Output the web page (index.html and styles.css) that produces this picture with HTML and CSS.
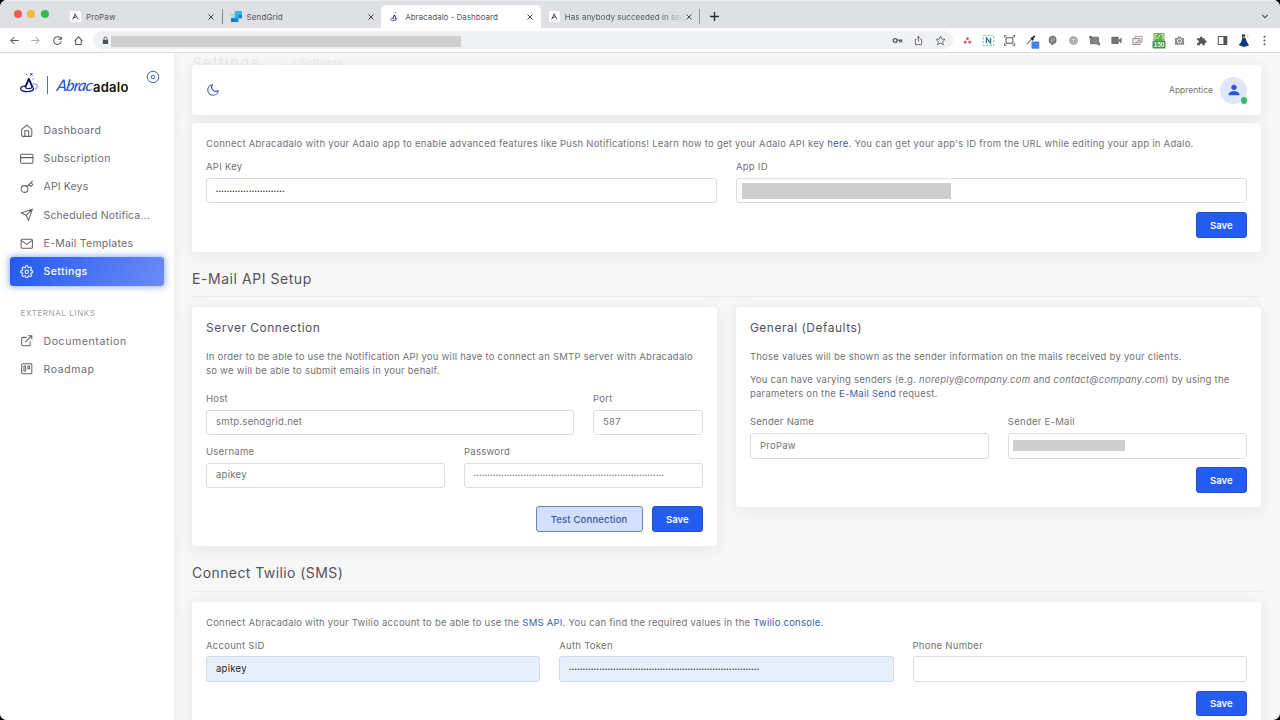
FILE: index.html
```html
<!DOCTYPE html>
<html lang="en">
<head>
<meta charset="utf-8">
<title>Abracadalo - Dashboard</title>
<link rel="stylesheet" href="styles.css">
</head>
<body>
<svg class="defs" width="0" height="0" aria-hidden="true">
  <symbol id="x" viewBox="0 0 8 8"><path d="M1.500 1.500l5 5M6.500 1.500l-5 5" fill="none" stroke="#45484c" stroke-width="1"/></symbol>
  <symbol id="adalo" viewBox="0 0 11 11"><rect width="11" height="11" rx="1.500" fill="#fff"/><path d="M2.700 8.300L5.200 3.200l2.800 5.100M3.900 6.800L6 5.800" fill="none" stroke="#333" stroke-width=".9"/><circle cx="5" cy="2.400" r=".5" fill="#555"/><path d="M2 9.300h6.500" stroke="#d9c7a5" stroke-width=".6"/></symbol>
  <symbol id="hat" viewBox="0 0 20 24"><path d="M6.200 17.200L9.800 8.400L13.600 16.800" fill="none" stroke="#151560" stroke-width="2" stroke-linejoin="round"/><path d="M6 15.400C.6 16 0 20.200 6 21C11 21.600 15.600 20.200 14.200 17" fill="none" stroke="#1a1a68" stroke-width="1.400"/><path d="M6.500 17.500Q10 19 13.300 17" fill="none" stroke="#1a1a68" stroke-width="1.200"/><path d="M13.800 13.200C18.800 13 19.800 17 16 18.800" fill="none" stroke="#9aa7e6" stroke-width="1.200"/><path d="M11 2.600l2.600 2.400M13.500 2.500l-2.400 2.600" stroke="#25256e" stroke-width=".9"/><circle cx="7.500" cy="4" r=".7" fill="#4a64cc"/><circle cx="14" cy="8.500" r=".8" fill="#8c9ee2"/></symbol>
</svg>

<div class="window">
  <header class="tabs">
    <div class="lights"><i class="red"></i><i class="yellow"></i><i class="green"></i></div>
    <div class="tab"><svg class="fav"><use href="#adalo"/></svg><span>ProPaw</span><svg class="close"><use href="#x"/></svg></div>
    <div class="tab ruled-left"><svg class="fav" viewBox="0 0 11 11"><path d="M3.700 0H11v7.300H7.300V11H0V3.700h3.700z" fill="#35b5e8"/><path d="M0 3.700h3.700v3.600H0z" fill="#a5dcf0"/><path d="M3.700 7.300h3.600V11H3.700zM7.300 3.700H11v3.600H7.300z" fill="#1a82d6"/><path d="M0 7.300h3.700V11H0z" fill="#1670c9"/></svg><span>SendGrid</span><svg class="close"><use href="#x"/></svg></div>
    <div class="tab active"><svg class="fav"><use href="#hat"/></svg><span>Abracadalo - Dashboard</span><svg class="close"><use href="#x"/></svg></div>
    <div class="tab"><svg class="fav"><use href="#adalo"/></svg><span class="fade">Has anybody succeeded in sen</span><svg class="close"><use href="#x"/></svg></div>
    <svg class="plus" viewBox="0 0 10 10"><path d="M5 1v8M1 5h8" stroke="#2b2d30" stroke-width="1.200"/></svg>
    <svg class="chev" viewBox="0 0 10 10"><path d="M2.200 3.800L5 6.600l2.800-2.800" fill="none" stroke="#4a4d51" stroke-width="1.100"/></svg>
  </header>

  <div class="toolbar">
    <div class="cells nav-cells">
      <svg viewBox="0 0 12 12"><path d="M10.500 6H2M5.800 2.200L2 6l3.800 3.800" class="ink"/></svg>
      <svg viewBox="0 0 12 12"><path d="M1.500 6H10M6.200 2.200L10 6 6.200 9.800" class="ink pale"/></svg>
      <svg viewBox="0 0 12 12"><path d="M9.800 4.200A4.200 4.200 0 1 0 10.100 7M10.200 1.500v3.200H7" class="ink"/></svg>
      <svg viewBox="0 0 12 12"><path d="M1.700 6.300L6 2l4.300 4.300M3 5.500V10.300h6V5.500" class="ink"/></svg>
    </div>
    <div class="omnibox">
      <svg class="lock" viewBox="0 0 8 10"><path d="M1 4h6v5H1z" fill="#4b4e52"/><path d="M2.300 4V2.700a1.700 1.700 0 0 1 3.400 0V4" fill="none" stroke="#4b4e52"/></svg>
      <div class="redact url"></div>
      <div class="cells">
        <svg viewBox="0 0 12 12"><circle cx="3.400" cy="6" r="2.100" class="ink heavy"/><path d="M5.500 5.700h5.800M8.400 6v2.200M10.400 6v2.200" class="ink heavy"/></svg>
        <svg viewBox="0 0 12 12"><path d="M4 4.600H2.600v5.900h6.800V4.600H8M6 7.300V1.500M4.200 3.200L6 1.400l1.800 1.800" class="ink thin"/></svg>
        <svg viewBox="0 0 12 12"><path d="M6 1.200l1.450 3.250 3.550.35-2.680 2.350.8 3.450L6 8.800l-3.120 1.800.8-3.450L1 4.800l3.550-.35z" class="ink thin"/></svg>
      </div>
    </div>
    <div class="cells extensions">
      <svg viewBox="0 0 12 12"><g fill="#e35668"><circle cx="6" cy="4" r="1.600"/><circle cx="3.500" cy="7.800" r="1.600"/><circle cx="8.500" cy="7.800" r="1.600"/></g></svg>
      <svg viewBox="0 0 12 12"><rect x=".3" y=".3" width="11.400" height="11.400" fill="none" stroke="#69b4c0" stroke-width="1" stroke-dasharray="2.500 1.600"/><path d="M3.800 9V3.200L8.200 8.800V3" fill="none" stroke="#218293" stroke-width="1.500"/></svg>
      <svg viewBox="0 0 12 12"><rect x="2.300" y="3" width="7.400" height="6" class="ink"/><path d="M.5 2.700V.8h2M9.500.8h2v1.900M.5 9.300v1.900h2M9.500 11.200h2V9.300" class="ink"/></svg>
      <svg viewBox="0 0 12 12"><path d="M1 10l5.500-6" stroke="#777" stroke-width="1.300"/><path d="M5.500 3l2.500 2.500M6.500 4.200L9.500 1" stroke="#222" stroke-width="1.900"/><rect x="6" y="7.200" width="8.500" height="7.800" rx=".8" fill="#4480ea"/></svg>
      <svg viewBox="0 0 12 12"><path d="M6 .8a4.700 4.700 0 0 1 1 9.200L5 12l-.3-2.200A4.700 4.700 0 0 1 6 .8z" fill="#777a7d"/><path d="M5 8V3.800h1.300a1.300 1.300 0 0 1 0 2.600H5" fill="none" stroke="#c5c5c5" stroke-width=".9"/></svg>
      <svg viewBox="0 0 12 12"><circle cx="6" cy="6" r="4.600" fill="#999"/><circle cx="6" cy="6" r="3" fill="none" stroke="#ddd" stroke-width=".8"/><path d="M4.600 4.800h2.800M6 4.800v3" stroke="#eee"/></svg>
      <svg viewBox="0 0 12 12"><rect x="1" y="2" width="10" height="8" rx="1" fill="#7b7d80"/><path d="M.8 3.500V1.500h2M9.200 10.800H11.400V8.500" fill="none" stroke="#444"/><path d="M3 8l4-4M6 9l3-3" stroke="#a5a5a5" stroke-width=".8"/></svg>
      <svg viewBox="0 0 12 12"><rect x=".4" y="2" width="8" height="7.800" rx=".8" fill="#707376"/><path d="M8.200 5.500l3.300-2.700v6.400l-3.300-2.700z" fill="#707376"/></svg>
      <svg viewBox="0 0 12 12"><path d="M3.500 4V1.500h7.500v6H9" fill="none" stroke="#a49596"/><rect x="1" y="4" width="7.800" height="6.500" fill="#eee" stroke="#8a8485"/><path d="M3 8.500h3L7.500 5.500" stroke="#c65757" fill="none"/></svg>
      <svg viewBox="0 0 14 16" class="badge-ext"><rect x="1.500" y="0" width="11" height="8" fill="#62b04d"/><path d="M3 6.500V1.500h2M9 1.500h2v5M5 6l3-4" stroke="#e1f1dc" fill="none"/><rect x=".5" y="8" width="13" height="7.500" rx="1" fill="#43914a"/><text x="7" y="14" text-anchor="middle" class="badge-num">150</text></svg>
      <svg viewBox="0 0 12 12"><path d="M1 3.200h2.700l1-1.500h2.600l1 1.500h2.700v7.300H1z" fill="#8b8d90"/><circle cx="6" cy="6.500" r="2.200" fill="#888" stroke="#fff"/></svg>
      <svg viewBox="0 0 12 12"><path d="M1.200 3.500H4.300a1.400 1.400 0 1 1 2.700 0H9.500V6a1.400 1.400 0 1 1 0 2.600V11.200H7a1.400 1.400 0 1 0-2.600 0H1.200V8.400a1.400 1.400 0 1 0 0-2.600z" fill="#54575a"/></svg>
      <svg viewBox="0 0 12 12"><rect x="1.400" y="1.700" width="9.200" height="8.600" class="ink"/><path d="M7 1.700h4v8.600H7z" fill="#4e5154"/></svg>
      <svg viewBox="0 0 12 14" class="person"><circle cx="5.500" cy="2.800" r="1.900" fill="#584440"/><path d="M4.500 4.500l3 .5 1 3 2.500 4.500-5 1.500L.5 12l2.500-2.500z" fill="#0d3c7b"/><path d="M5.500 3.500h1.600v2z" fill="#dcae96"/><circle cx="9.700" cy="3" r=".7" fill="#b88"/></svg>
      <svg viewBox="0 0 12 12"><g fill="#55585b"><circle cx="6" cy="1.800" r="1.100"/><circle cx="6" cy="6" r="1.100"/><circle cx="6" cy="10.200" r="1.100"/></g></svg>
    </div>
  </div>

  <div class="app">
    <aside class="sidebar">
      <div class="brand">
        <svg class="hat"><use href="#hat"/></svg>
        <i class="bar"></i>
        <span class="script">Abrac</span><span class="word">adalo</span>
        <svg class="pin" viewBox="0 0 14 14"><circle cx="7" cy="7" r="5.700"/><circle cx="7" cy="7" r="1.800"/></svg>
      </div>
      <nav class="menu">
        <a><svg viewBox="0 0 24 24"><path d="M3 9.500L12 2l9 7.500V20a2 2 0 0 1-2 2H5a2 2 0 0 1-2-2zM8.500 22V12h7v10"/></svg><span class="m1">Dashboard</span></a>
        <a><svg viewBox="0 0 24 24"><rect x="1" y="4" width="22" height="16" rx="2"/><path d="M1 10h22"/></svg><span class="m1">Subscription</span></a>
        <a><svg viewBox="0 0 24 24"><circle cx="8" cy="16" r="6"/><path d="M12.200 11.800L22 2M16 8l3.500 3.500L23 8l-3.500-3.500"/></svg><span class="m2">API Keys</span></a>
        <a><svg viewBox="0 0 24 24"><path d="M22 2L11 13M22 2l-7 20-4-9-9-4z"/></svg><span class="m2">Scheduled Notifica...</span></a>
        <a><svg viewBox="0 0 24 24"><rect x="2" y="4" width="20" height="16" rx="2"/><path d="M22 6l-10 7L2 6"/></svg><span class="m3">E-Mail Templates</span></a>
        <a class="current"><svg viewBox="0 0 24 24"><circle cx="12" cy="12" r="3"/><path d="M19.400 15a1.650 1.650 0 0 0 .33 1.820l.06.06a2 2 0 1 1-2.830 2.830l-.06-.06a1.650 1.650 0 0 0-2.820 1.170V21a2 2 0 0 1-4 0v-.09A1.650 1.650 0 0 0 7.200 19.700l-.06.06a2 2 0 1 1-2.830-2.830l.06-.06A1.650 1.650 0 0 0 3.090 14H3a2 2 0 0 1 0-4h.09A1.650 1.650 0 0 0 4.300 7.200l-.06-.06a2 2 0 1 1 2.830-2.830l.06.06A1.650 1.650 0 0 0 10 3.090V3a2 2 0 0 1 4 0v.09a1.650 1.650 0 0 0 2.820 1.170l.06-.06a2 2 0 1 1 2.830 2.830l-.06.06A1.650 1.650 0 0 0 20.910 10H21a2 2 0 0 1 0 4h-.09a1.650 1.650 0 0 0-1.510 1z"/></svg><span class="m1">Settings</span></a>
        <h6>EXTERNAL LINKS</h6>
        <a><svg viewBox="0 0 24 24"><path d="M18 13v6a2 2 0 0 1-2 2H5a2 2 0 0 1-2-2V8a2 2 0 0 1 2-2h6M15 3h6v6M10 14L21 3"/></svg><span class="m4">Documentation</span></a>
        <a><svg viewBox="0 0 24 24"><rect x="3" y="3" width="18" height="18" rx="2"/><path d="M7 7h3v9H7zM14 7h3v5h-3z"/></svg><span class="m4">Roadmap</span></a>
      </nav>
    </aside>

    <main class="content">
      <div class="ghost"><b>Settings</b><span>⌂ › Settings</span></div>
      <div class="card topbar">
        <svg class="moon" viewBox="0 0 24 24"><path d="M21 12.800A9 9 0 1 1 11.200 3 7 7 0 0 0 21 12.800z"/></svg>
        <div class="user"><span>Apprentice</span>
          <div class="avatar"><svg viewBox="0 0 24 24"><circle cx="12" cy="8" r="4"/><path d="M4 20v-2c0-3 5.300-4.500 8-4.500s8 1.500 8 4.500v2z"/></svg><i></i></div>
        </div>
      </div>

      <section class="card first">
        <p class="p1">Connect Abracadalo with your Adalo app to enable advanced features like Push Notifications! Learn how to get your Adalo API key <a>here</a>. You can get your app's ID from the URL while editing your app in Adalo.</p>
        <div class="row halves near">
          <label>API Key<span class="field dark"><span class="dots">•••••••••••••••••••••••••</span></span></label>
          <label>App ID<span class="field"><i class="redact app-id"></i></span></label>
        </div>
        <div class="actions"><button>Save</button></div>
      </section>

      <h2 class="h-mail">E-Mail API Setup</h2>
      <div class="row halves panels">
        <section class="card">
          <h3>Server Connection</h3>
          <p>In order to be able to use the Notification API you will have to connect an SMTP server with Abracadalo<br>so we will be able to submit emails in your behalf.</p>
          <div class="row host">
            <label>Host<span class="field">smtp.sendgrid.net</span></label>
            <label>Port<span class="field">587</span></label>
          </div>
          <div class="row halves near">
            <label>Username<span class="field">apikey</span></label>
            <label>Password<span class="field"><span class="dots">•••••••••••••••••••••••••••••••••••••••••••••••••••••••••••••••••••••</span></span></label>
          </div>
          <div class="actions far"><button class="soft">Test Connection</button><button>Save</button></div>
        </section>
        <section class="card">
          <h3>General (Defaults)</h3>
          <p>Those values will be shown as the sender information on the mails received by your clients.</p>
          <p class="next">You can have varying senders (e.g. <em>noreply@company.com</em> and <em>contact@company.com</em>) by using the<br>parameters on the <a>E-Mail Send</a> request.</p>
          <div class="row halves host-gap">
            <label>Sender Name<span class="field">ProPaw</span></label>
            <label>Sender E-Mail<span class="field"><i class="redact mail"></i></span></label>
          </div>
          <div class="actions"><button>Save</button></div>
        </section>
      </div>

      <h2 class="h-sms">Connect Twilio (SMS)</h2>
      <section class="card sms">
        <p>Connect Abracadalo with your Twilio account to be able to use the <a>SMS API</a>. You can find the required values in the <a>Twilio console</a>.</p>
        <div class="row thirds near">
          <label>Account SID<span class="field filled">apikey</span></label>
          <label>Auth Token<span class="field filled"><span class="dots">•••••••••••••••••••••••••••••••••••••••••••••••••••••••••••••••••••••</span></span></label>
          <label>Phone Number<span class="field"></span></label>
        </div>
        <div class="actions"><button>Save</button></div>
      </section>
    </main>
  </div>
</div>
</body>
</html>
```

FILE: styles.css
```css
* { box-sizing: border-box; }
body { margin: 0; background: #000; overflow: hidden; font-family: Inter, "Open Sans", sans-serif; color: #73727a; }
h2, h3, h6, p { margin: 0; font-weight: 400; }
.defs { position: absolute; }
.window { height: 720px; border-radius: 7px; overflow: hidden; display: flex; flex-direction: column; background: #f7f7f7; }

.tabs { height: 28px; flex: none; display: flex; background: #dee0e4; border-top: 1px solid #e9edf0; padding-top: 4px; font-size: 8px; color: #55585d; }
.lights { width: 62px; flex: none; display: flex; gap: 5.300px; padding: 5px 0 0 14px; }
.lights i { width: 8px; height: 8px; border-radius: 50%; }
.red { background: #ee5b54; } .yellow { background: #f5b63e; } .green { background: #2fc147; }
.tab { width: 159.600px; height: 23px; display: flex; align-items: center; padding: 0 6.500px 0 8px; letter-spacing: .1px; }
.tab span { flex: 1; margin-left: 5px; white-space: nowrap; min-width: 0; }
.fav { width: 11px; height: 11px; flex: none; }
.close { width: 8px; height: 8px; flex: none; }
.tab.active { background: #fff; border-radius: 5px 5px 0 0; letter-spacing: 0; }
.tab .fade { -webkit-mask-image: linear-gradient(90deg, #000 80%, transparent); mask-image: linear-gradient(90deg, #000 80%, transparent); letter-spacing: .05px; }
.tab.ruled-left { border-left: 1px solid transparent; border-image: linear-gradient(transparent 22%, #85888b 22% 78%, transparent 78%) 1; }
.tab:last-of-type { border-right: 1px solid transparent; border-image: linear-gradient(transparent 22%, #909396 22% 78%, transparent 78%) 1; }
.plus { width: 11px; height: 11px; margin: 6px 0 0 9px; }
.chev { width: 10px; height: 10px; margin: 6px 10px 0 auto; }

.toolbar { height: 25px; flex: none; display: flex; align-items: center; background: #fff; border-bottom: 1px solid #dcdcdd; padding: 0 4px; }
.cells { display: flex; flex: none; align-items: center; }
.cells svg { width: 11px; height: 11px; margin: 0 5.130px; overflow: visible; }
.extensions { margin-right: .5px; }
.cells .badge-ext { width: 14px; height: 16px; margin: 2px 3.630px 0; }
.cells .person { width: 12px; height: 14px; margin: 0 4.630px; }
.badge-num { font: 700 6.500px "Liberation Sans", sans-serif; fill: #e6f4e4; }
.ink { fill: none; stroke: #55585c; stroke-width: 1.100; }
.ink.pale { stroke: #a9abae; } .ink.heavy { stroke-width: 1.400; } .ink.thin { stroke-width: .9; }
.omnibox { height: 18.500px; flex: 1; display: flex; align-items: center; margin: 0 4px; background: #f0f1f3; border-radius: 10px; padding-right: 2px; }
.lock { width: 7px; height: 9px; margin: 0 2.500px 0 8.500px; }
.redact { display: block; background: #cfcfcf; }
.url { width: 350px; height: 10.500px; margin: 3px auto 0 0; }

.app { flex: 1; display: flex; min-height: 0; }
.sidebar { width: 173.500px; flex: none; background: #fff; box-shadow: 0 0 10px rgba(0,0,0,.06); }
.brand { height: 63.500px; display: flex; align-items: flex-start; padding: 17px 0 0 19px; }
.hat { width: 20px; height: 25px; flex: none; }
.bar { width: 1px; height: 18px; background: #4a6fc6; margin: 6px 9px 0 8px; }
.script { font: italic 500 16px/18px Lato, sans-serif; letter-spacing: -.8px; color: #2c56cf; margin-top: 6px; transform: skewX(-8deg); width: 36px; }
.word { font-size: 13px; line-height: 18px; font-weight: 600; color: #111; letter-spacing: .25px; margin-top: 7.500px; width: 53px; }
.pin { width: 14px; height: 14px; flex: none; fill: none; stroke: #3f64ba; stroke-width: 1; }
.menu { display: flex; flex-direction: column; padding: 0 10px; }
.menu a { height: 28.200px; display: flex; align-items: center; padding-left: 10px; font-size: 10.500px; color: #6d6b73; border-radius: 3px; white-space: nowrap; }
.menu svg { width: 13.500px; height: 13.500px; margin-right: 10px; fill: none; stroke: #625f66; stroke-width: 1.800; stroke-linejoin: round; stroke-linecap: round; }
.menu .current { color: #fff; font-weight: 500; background: linear-gradient(118deg, #2359ec, #6b8bf8); box-shadow: 0 0 6px 1px rgba(45,95,240,.5); }
.menu .current svg { stroke: #fff; }
.menu h6 { font-size: 8px; line-height: 14px; color: #a3a2a8; padding-left: 10.500px; margin: 20.300px 0 7px; letter-spacing: .6px; }
.m1 { letter-spacing: .4px; } .m2 { letter-spacing: .14px; } .m3 { letter-spacing: .25px; } .m4 { letter-spacing: .6px; }

.content { flex: 1; padding: 12px 19px 0 18.500px; min-width: 0; position: relative; }
.ghost { position: absolute; left: 18.500px; top: 0; display: flex; gap: 22px; font-size: 15px; line-height: 19px; color: #e9e9e9; filter: blur(.4px); }
.ghost b { font-weight: 400; letter-spacing: 1.300px; }
.ghost span { font-size: 10px; line-height: 19px; letter-spacing: .6px; }
.card { background: #fff; border-radius: 4px; padding: 14px; box-shadow: 0 3px 15px rgba(34,41,47,.08); }
.topbar { height: 50px; display: flex; align-items: center; justify-content: space-between; position: relative; }
.moon { width: 14px; height: 14px; fill: none; stroke: #3e5da7; stroke-width: 1.900; stroke-linejoin: round; }
.user { display: flex; align-items: center; gap: 7px; font-size: 8.500px; }
.avatar { width: 27px; height: 27px; border-radius: 50%; background: #e1e7fb; padding: 5.500px; position: relative; }
.avatar svg { width: 16px; height: 16px; display: block; fill: #2a58d6; }
.avatar i { position: absolute; right: 0; bottom: 0; width: 6.500px; height: 6.500px; border-radius: 50%; background: #35bb72; }
.first { margin-top: 8px; }
p { font-size: 9.500px; line-height: 14px; white-space: nowrap; letter-spacing: .24px; }
.p1 { letter-spacing: .26px; }
p a { color: #3b60ad; }
.row { display: grid; column-gap: 18.800px; }
.halves { grid-template-columns: 1fr 1fr; }
.thirds { grid-template-columns: 1fr 1fr 1fr; }
.host { grid-template-columns: 368.200px 1fr; margin-top: 13.800px; }
.host-gap { margin-top: 13.800px; }
.near { margin-top: 9px; }
.panels .near { margin-top: 9.500px; }
label { display: block; font-size: 9.500px; line-height: 14px; letter-spacing: .27px; }
.field { display: flex; align-items: center; height: 25.600px; margin-top: 3.800px; padding: 0 9px; border: 1px solid #dedde0; border-radius: 3px; background: #fff; }
.filled { background: #e6effc; border-color: #d3dbe8; color: #26272b; }
.dark { color: #222; }
.dots { font: 5px/6px "Liberation Sans", sans-serif; letter-spacing: 1.010px; }
.app-id { width: 209px; height: 16px; margin-left: -3.500px; }
.mail { width: 112px; height: 11.500px; margin-left: -5px; }
.actions { display: flex; justify-content: flex-end; gap: 9px; margin-top: 8.900px; }
.actions.far { margin-top: 18.300px; }
button { width: 51.500px; height: 25.600px; padding: 0; border: 1px solid #2150cf; border-radius: 3px; background: #235cee; color: #fff; font: 600 9.500px Inter, sans-serif; }
button.soft { width: 107px; background: #d3dffd; border-color: #6b84c0; color: #3559a8; font-weight: 500; letter-spacing: .17px; }
h2 { height: 36px; margin: 9.200px 0 9.800px; padding-top: 9px; font-size: 14px; line-height: 18px; color: #55525d; border-bottom: 1px solid #ededf1; letter-spacing: .55px; }
.panels { align-items: start; }
h3 { font-size: 12px; line-height: 14px; color: #55525d; margin-bottom: 15.200px; letter-spacing: .5px; }
.next { margin-top: 9.300px; }
h2.h-sms { height: 36.500px; letter-spacing: .42px; }
.sms { height: 140px; }
```
